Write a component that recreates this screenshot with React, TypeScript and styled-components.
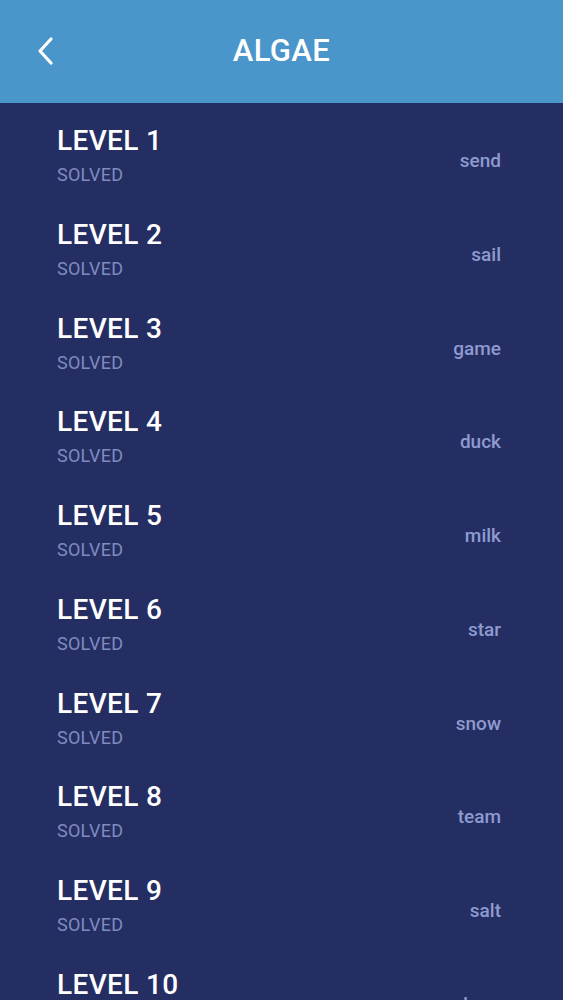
import React, { FC } from 'react';
import styled, { createGlobalStyle } from 'styled-components';

const GlobalStyle = createGlobalStyle`
  html, body {
    margin: 0;
    padding: 0;
    background: #252e63;
  }
  body {
    font-family: Roboto, "Noto Sans", "Liberation Sans", sans-serif;
    -webkit-font-smoothing: antialiased;
  }
`;

const Screen = styled.div`
  width: 563px;
  min-height: 1000px;
  background: #252e63;
  overflow: hidden;
`;

const Header = styled.header`
  height: 103px;
  background: #4a95c9;
  display: flex;
  align-items: center;
  justify-content: center;
  position: relative;
`;

const BackButton = styled.button`
  position: absolute;
  left: 30px;
  top: 32px;
  width: 32px;
  height: 38px;
  padding: 0;
  border: none;
  background: transparent;
  display: flex;
  align-items: center;
  justify-content: center;
  cursor: pointer;
`;

const Title = styled.h1`
  margin: 0;
  margin-top: -2px;
  color: #ffffff;
  font-size: 31px;
  font-weight: 500;
  letter-spacing: 0.4px;
`;

const List = styled.ul`
  list-style: none;
  margin: 0;
  padding: 0;
`;

const Row = styled.li`
  height: 93.75px;
  box-sizing: border-box;
  padding: 22px 62px 0 57px;
  display: flex;
  justify-content: space-between;
  align-items: flex-start;
`;

const Info = styled.div`
  display: flex;
  flex-direction: column;
`;

const LevelName = styled.span`
  color: #ffffff;
  font-size: 28px;
  line-height: 32px;
  font-weight: 500;
  letter-spacing: 0.35px;
`;

const Status = styled.span`
  margin-top: 7px;
  color: #7f8bbf;
  font-size: 18px;
  line-height: 22px;
  font-weight: 400;
  letter-spacing: 0.25px;
`;

const Word = styled.span`
  margin-top: 25px;
  color: #8e9bcf;
  font-size: 19px;
  line-height: 22px;
  font-weight: 500;
`;

const LEVELS = [
  'send',
  'sail',
  'game',
  'duck',
  'milk',
  'star',
  'snow',
  'team',
  'salt',
  'bear',
];

const ChevronLeft: FC = () => (
  <svg width="20" height="30" viewBox="0 0 20 30" fill="none">
    <path
      d="M15 3 L4 15 L15 27"
      stroke="#ffffff"
      strokeWidth="3.2"
      strokeLinecap="round"
      strokeLinejoin="round"
    />
  </svg>
);

const App: FC = () => (
  <Screen>
    <GlobalStyle />
    <Header>
      <BackButton aria-label="back">
        <ChevronLeft />
      </BackButton>
      <Title>ALGAE</Title>
    </Header>
    <List>
      {LEVELS.map((word, i) => (
        <Row key={word}>
          <Info>
            <LevelName>LEVEL {i + 1}</LevelName>
            <Status>SOLVED</Status>
          </Info>
          <Word>{word}</Word>
        </Row>
      ))}
    </List>
  </Screen>
);

export default App;
